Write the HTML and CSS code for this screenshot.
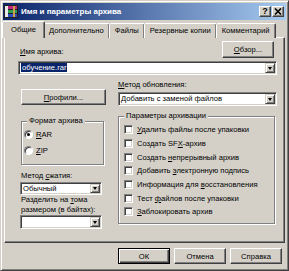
FILE: index.html
```html
<!DOCTYPE html>
<html lang="ru">
<head>
    <meta charset="UTF-8">
    <title>Имя и параметры архива</title>
    <link rel="stylesheet" href="styles.css">
</head>
<body>
<div class="dialog">
    <div class="titlebar">
        <svg class="app-icon" width="14" height="13" viewBox="0 0 14 13">
            <rect x="0" y="0" width="14" height="13" fill="#202020"/>
            <rect x="1" y="1" width="12" height="3" fill="#c02880"/>
            <rect x="1" y="5" width="12" height="3" fill="#30a050"/>
            <rect x="1" y="9" width="12" height="3" fill="#3050c0"/>
            <rect x="1" y="1" width="3" height="11" fill="#e8e8e8"/>
            <rect x="9" y="1" width="2" height="11" fill="#c8a050"/>
        </svg>
        <span class="title">Имя и параметры архива</span>
        <span class="cap-btn help">?</span>
        <span class="cap-btn close">
            <svg width="8" height="7" viewBox="0 0 8 7"><path d="M1 0.5 L7 6.5 M7 0.5 L1 6.5" stroke="#000" stroke-width="1.6"/></svg>
        </span>
    </div>

    <div class="tabs">
        <span class="tab active">Общие</span>
        <span class="tab">Дополнительно</span>
        <span class="tab">Файлы</span>
        <span class="tab">Резервные копии</span>
        <span class="tab">Комментарий</span>
    </div>

    <div class="panel">
        <div class="name-row">
            <span class="label"><u>И</u>мя архива:</span>
            <button class="btn browse"><u>О</u>бзор...</button>
        </div>
        <div class="combo name-combo">
            <span class="combo-text"><span class="sel">обучение.rar</span></span>
            <span class="drop"></span>
        </div>

        <div class="cols">
            <div class="col-left">
                <button class="btn profiles"><u>П</u>рофили...</button>

                <div class="group format">
                    <span class="legend">Формат архива</span>
                    <div class="option"><span class="radio checked"></span><span><u>R</u>AR</span></div>
                    <div class="option"><span class="radio"></span><span><u>Z</u>IP</span></div>
                </div>

                <div class="label method-label">Метод <u>с</u>жатия:</div>
                <div class="combo small-combo">
                    <span class="combo-text">Обычный</span>
                    <span class="drop"></span>
                </div>

                <div class="label split-label">
                    <div>Разделить на <u>т</u>ома</div>
                    <div>размером (в байтах):</div>
                </div>
                <div class="combo small-combo split-combo">
                    <span class="combo-text"></span>
                    <span class="drop"></span>
                </div>
            </div>

            <div class="col-right">
                <div class="label update-label"><u>М</u>етод обновления:</div>
                <div class="combo">
                    <span class="combo-text">Добавить с заменой файлов</span>
                    <span class="drop"></span>
                </div>

                <div class="group params">
                    <span class="legend">Параметры архивации</span>
                    <div class="check"><span class="box"></span><span><u>У</u>далить файлы после упаковки</span></div>
                    <div class="check"><span class="box"></span><span>Создать SF<u>X</u>-архив</span></div>
                    <div class="check"><span class="box"></span><span>Создать <u>н</u>епрерывный архив</span></div>
                    <div class="check"><span class="box"></span><span>Добавить <u>э</u>лектронную подпись</span></div>
                    <div class="check"><span class="box"></span><span>Информация для <u>в</u>осстановления</span></div>
                    <div class="check"><span class="box"></span><span>Тест <u>ф</u>айлов после упаковки</span></div>
                    <div class="check"><span class="box"></span><span><u>З</u>аблокировать архив</span></div>
                </div>
            </div>
        </div>
    </div>

    <div class="footer">
        <button class="btn default">ОК</button>
        <button class="btn">Отмена</button>
        <button class="btn">Справка</button>
    </div>
</div>
</body>
</html>
```

FILE: styles.css
```css
* {
    box-sizing: border-box;
}
body {
    margin: 0;
    font-family: "Liberation Sans", Arial, sans-serif;
    font-size: 7.6px;
    color: #000;
    background: #d4d0c8;
}
u {
    text-decoration: underline;
    text-underline-offset: 1px;
}
.dialog {
    width: 289px;
    height: 271px;
    background: #d4d0c8;
    border: 1px solid;
    border-color: #d4d0c8 #404040 #404040 #d4d0c8;
    box-shadow: inset 1px 1px #fff, inset -1px -1px #808080;
    padding: 2px;
    display: flex;
    flex-direction: column;
}

/* title bar */
.titlebar {
    height: 17px;
    flex: 0 0 17px;
    display: flex;
    align-items: center;
    padding: 0 2px 0 1px;
    background: linear-gradient(to right, #0a246a, #a6caf0);
}
.app-icon {
    flex: 0 0 auto;
}
.title {
    flex: 1;
    margin-left: 3px;
    color: #fff;
    font-weight: bold;
    font-size: 8px;
    white-space: nowrap;
}
.cap-btn {
    width: 12px;
    height: 11px;
    display: flex;
    align-items: center;
    justify-content: center;
    background: #d4d0c8;
    border: 1px solid;
    border-color: #fff #404040 #404040 #fff;
    box-shadow: inset -1px -1px #808080;
    font-weight: bold;
    font-size: 9px;
    line-height: 1;
}
.cap-btn.close {
    margin-left: 1px;
}

/* tabs */
.tabs {
    display: flex;
    align-items: flex-end;
    height: 17px;
    flex: 0 0 17px;
    margin-top: 1px;
    padding-left: 1px;
    position: relative;
    z-index: 1;
}
.tab {
    height: 15px;
    padding: 2px 5px 0;
    border: 1px solid;
    border-bottom: none;
    border-color: #fff #404040 transparent #fff;
    box-shadow: inset -1px 0 #808080;
    border-radius: 2px 2px 0 0;
    margin-left: -1px;
    white-space: nowrap;
    background: #d4d0c8;
}
.tab.active {
    height: 17px;
    padding: 3px 8px 0;
    margin-left: -2px;
    margin-right: -2px;
    position: relative;
    z-index: 2;
}
.tab.active + .tab {
    margin-left: 0;
}

/* main panel */
.panel {
    flex: 0 0 206px;
    margin: -1px 1px 0;
    border: 1px solid;
    border-color: #fff #404040 #404040 #fff;
    box-shadow: inset -1px -1px #808080;
    padding: 3px 7px 0 14px;
}
.label {
    line-height: 10px;
    white-space: nowrap;
}
.name-row {
    display: flex;
    justify-content: space-between;
    align-items: flex-end;
    height: 17px;
}
.name-row .label {
    margin-left: 1px;
    margin-bottom: 1px;
}

/* buttons */
.btn {
    font: inherit;
    color: #000;
    background: #d4d0c8;
    border: 1px solid;
    border-color: #fff #404040 #404040 #fff;
    box-shadow: inset -1px -1px #808080;
    padding: 0;
    height: 16px;
}
.btn.default {
    border-color: #000;
    box-shadow: inset 1px 1px #fff, inset -1px -1px #404040, inset -2px -2px #808080;
}
.browse {
    width: 52px;
    height: 17px;
    margin-right: 3px;
}
.profiles {
    width: 85px;
    margin: 14px 0 0 2px;
    display: block;
}

/* combo boxes */
.combo {
    display: flex;
    height: 14px;
    padding: 1px;
    background: #fff;
    border: 1px solid;
    border-color: #808080 #fff #fff #808080;
    box-shadow: inset 1px 1px #404040, inset -1px -1px #d4d0c8;
}
.combo-text {
    flex: 1;
    padding-left: 1px;
    line-height: 10px;
    white-space: nowrap;
    overflow: hidden;
}
.sel {
    background: #0a246a;
    color: #fff;
    padding: 0 1px;
}
.drop {
    width: 10px;
    flex: 0 0 10px;
    background: #d4d0c8;
    border: 1px solid;
    border-color: #d4d0c8 #404040 #404040 #d4d0c8;
    box-shadow: inset 1px 1px #fff, inset -1px -1px #808080;
    display: flex;
    align-items: center;
    justify-content: center;
}
.drop::after {
    content: "";
    border-left: 2.5px solid transparent;
    border-right: 2.5px solid transparent;
    border-top: 3px solid #000;
}
.name-combo {
    margin: 3px 0 0 -1px;
}

/* columns */
.cols {
    display: grid;
    grid-template-columns: 87px 1fr;
    column-gap: 12px;
}
.update-label {
    margin-top: 5px;
}
.col-right .combo {
    margin-top: 2px;
}

/* group boxes */
.group {
    position: relative;
    border: 1px solid #808080;
    box-shadow: inset 1px 1px #fff, 1px 1px #fff;
}
.legend {
    position: absolute;
    top: -6px;
    left: 5px;
    padding: 0 2px;
    line-height: 10px;
    background: #d4d0c8;
    white-space: nowrap;
}
.format {
    width: 83px;
    height: 44px;
    margin: 16px 0 0 2px;
    padding: 7px 0 0 2px;
}
.option {
    display: flex;
    align-items: center;
    height: 10px;
    margin-bottom: 6px;
}
.radio {
    width: 9px;
    height: 9px;
    margin-right: 3px;
    border-radius: 50%;
    background: #fff;
    border: 1px solid;
    border-color: #808080 #fff #fff #808080;
    box-shadow: inset 1px 1px #404040;
    display: flex;
    align-items: center;
    justify-content: center;
}
.radio.checked::after {
    content: "";
    width: 3px;
    height: 3px;
    border-radius: 50%;
    background: #000;
}
.params {
    height: 108px;
    margin: 10px 2px 0 0;
    padding: 6px 0 0 5px;
}
.check {
    display: flex;
    align-items: center;
    height: 13.67px;
    white-space: nowrap;
}
.box {
    width: 9px;
    height: 9px;
    flex: 0 0 9px;
    margin-right: 4px;
    background: #fff;
    border: 1px solid;
    border-color: #808080 #fff #fff #808080;
    box-shadow: inset 1px 1px #404040, inset -1px -1px #d4d0c8;
}
.method-label {
    margin: 6px 0 0 2px;
}
.small-combo {
    width: 82px;
    height: 13px;
    margin: 1px 0 0 1px;
}
.small-combo .combo-text {
    line-height: 9px;
}
.split-label {
    margin: 0 0 0 2px;
    line-height: 10px;
}
.split-combo {
    height: 14px;
    margin-top: 0;
}

/* footer buttons */
.footer {
    display: flex;
    justify-content: flex-end;
    gap: 4px;
    padding: 5px 4px 0 0;
}
.footer .btn {
    width: 52px;
    height: 16px;
}
```
